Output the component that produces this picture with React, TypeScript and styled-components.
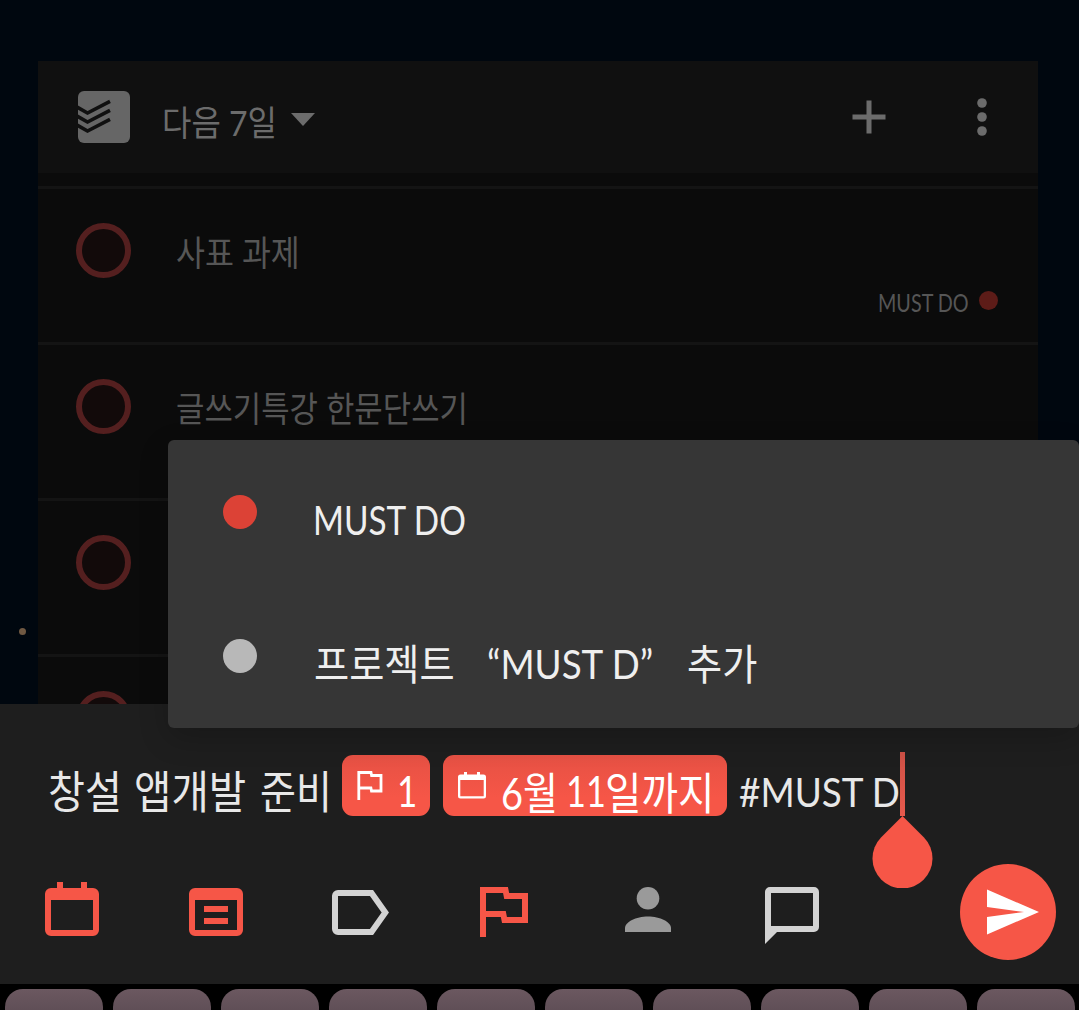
import React, { useLayoutEffect, useRef, useState } from "react";
import styled, { createGlobalStyle } from "styled-components";

const RED = "#f65647";

const GlobalStyle = createGlobalStyle`
  * { box-sizing: border-box; }
  body { margin: 0; background: #000; overflow: hidden; }
`;

const Screen = styled.main`
  position: relative;
  width: 1079px;
  height: 1010px;
  overflow: hidden;
  display: flex;
  flex-direction: column;
  background: #000;
  font-family: Lato, "Noto Sans CJK KR", sans-serif;
`;

/* ---------- fitted text ---------- */

const FitBox = styled.span<{ $w: number; $size: number; $color: string; $weight: number; $gap: number; $drop: number }>`
  display: block;
  flex: none;
  width: ${(p) => p.$w}px;
  margin-left: ${(p) => p.$gap}px;
  padding-top: ${(p) => p.$drop}px;
  font-size: ${(p) => p.$size}px;
  line-height: ${(p) => p.$size}px;
  font-weight: ${(p) => p.$weight};
  color: ${(p) => p.$color};
  white-space: pre;
`;

const FitInner = styled.span`
  display: inline-block;
  transform-origin: left center;
`;

type FitProps = {
  children: string;
  w: number;
  size: number;
  color: string;
  weight?: number;
  gap?: number;
  drop?: number;
};

function Fit({ children, w, size, color, weight = 400, gap = 0, drop = 0 }: FitProps) {
  const ref = useRef<HTMLSpanElement>(null);
  const [scale, setScale] = useState(1);
  useLayoutEffect(() => {
    if (ref.current) setScale(w / ref.current.offsetWidth);
  }, [w, children]);
  return (
    <FitBox $w={w} $size={size} $color={color} $weight={weight} $gap={gap} $drop={drop}>
      <FitInner ref={ref} style={{ transform: `scaleX(${scale})` }}>{children}</FitInner>
    </FitBox>
  );
}

/* ---------- dimmed widget ---------- */

const Wallpaper = styled.section`
  position: relative;
  flex: none;
  height: 704px;
  padding: 61px 41px 0 38px;
  overflow: hidden;
  background: #00070f;
`;

const Spark = styled.i`
  position: absolute;
  left: 19px;
  top: 628px;
  width: 7px;
  height: 7px;
  border-radius: 50%;
  background: #705943;
`;

const Widget = styled.div`
  background: #0b0b0b;
`;

const Header = styled.header`
  display: flex;
  align-items: center;
  height: 112px;
  padding: 0 51px 0 40px;
  background: #101010;
`;

const HeaderTools = styled.div`
  display: flex;
  align-items: center;
  gap: 91px;
  margin-left: auto;
`;

const Caret = styled.svg`
  margin: 4px 0 0 14px;
`;

const List = styled.ul`
  list-style: none;
  margin: 0;
  padding: 13px 0 0;
`;

const Task = styled.li`
  display: flex;
  height: 156px;
  border-top: 3px solid #141414;
  padding: 34px 40px 0 38px;
`;

const Ring = styled.i`
  flex: none;
  width: 55px;
  height: 55px;
  border: 6px solid #541f1f;
  border-radius: 50%;
  background: #120a0a;
`;

const TaskBody = styled.div`
  flex: 1;
  display: flex;
  flex-direction: column;
`;

const TaskTag = styled.div`
  display: flex;
  align-items: center;
  justify-content: flex-end;
  gap: 10px;
  margin-top: 16px;
`;

const Dot = styled.i<{ $size: number; $color: string }>`
  flex: none;
  width: ${(p) => p.$size}px;
  height: ${(p) => p.$size}px;
  border-radius: 50%;
  background: ${(p) => p.$color};
`;

/* ---------- composer sheet ---------- */

const Sheet = styled.section`
  flex: none;
  height: 280px;
  background: #1e1e1e;
  padding-top: 48px;
`;

const InputLine = styled.div`
  display: flex;
  align-items: center;
  height: 64px;
  padding-left: 48px;
`;

const Chip = styled.span<{ $w: number; $gap: number }>`
  flex: none;
  display: flex;
  align-items: center;
  width: ${(p) => p.$w}px;
  height: 61px;
  margin-top: 3px;
  margin-left: ${(p) => p.$gap}px;
  padding-left: 14px;
  border-radius: 11px;
  background: linear-gradient(#e65144, ${RED} 70%);
`;

const Cursor = styled.span`
  position: relative;
  flex: none;
  width: 5px;
  height: 64px;
  background: linear-gradient(#cf5146, #e6594c);
`;

const Handle = styled.svg`
  position: absolute;
  left: -28px;
  top: 63px;
`;

const Toolbar = styled.nav`
  display: flex;
  align-items: center;
  height: 96px;
  margin-top: 48px;
`;

const Tool = styled.button`
  flex: none;
  width: 144px;
  height: 96px;
  padding: 0;
  border: 0;
  background: none;
  display: grid;
  place-items: center;
`;

const Send = styled.button`
  flex: none;
  width: 96px;
  height: 96px;
  margin-left: 96px;
  padding: 0;
  border: 0;
  border-radius: 50%;
  background: ${RED};
`;

const Keyboard = styled.div`
  flex: 1;
  display: flex;
  gap: 10px;
  padding: 5px 0 0 5px;
  background: #000;
`;

const Key = styled.i`
  flex: none;
  width: 98px;
  height: 60px;
  border-radius: 18px;
  background: linear-gradient(#6b5860, #604f57 21px, #5b4a52);
`;

/* ---------- suggestion popup ---------- */

const Popup = styled.div`
  position: absolute;
  left: 168px;
  top: 440px;
  width: 911px;
  height: 288px;
  border-radius: 6px;
  background: #363636;
  box-shadow: 0 10px 30px rgba(0, 0, 0, 0.2);
`;

const Option = styled.div`
  display: flex;
  align-items: center;
  height: 144px;
  padding-left: 55px;
`;

const GRAY = "#d3d3d3";

const Todoist = () => (
  <svg width="52" height="52" viewBox="0 0 52 52">
    <rect width="52" height="52" rx="6" fill="#666" />
    <g fill="none" stroke="#101010" strokeWidth="3.600">
      <path d="M-1 16L9.500 22L32 10.300" />
      <path d="M-1 25L9.500 31L32 19.300" />
      <path d="M-1 34L9.500 40L32 28.300" />
    </g>
  </svg>
);

const CalendarIcon = () => (
  <svg width="72" height="72" viewBox="0 0 24 24" fill={RED}>
    <path fillRule="evenodd" d="M7 2h2v2h6V2h2v2h2a2 2 0 0 1 2 2v12a2 2 0 0 1-2 2H5a2 2 0 0 1-2-2V6a2 2 0 0 1 2-2h2zM5 8v10h14V8z" />
  </svg>
);

const ProjectIcon = () => (
  <svg width="72" height="72" viewBox="0 0 24 24" fill={RED}>
    <path fillRule="evenodd" d="M5 4h14a2 2 0 0 1 2 2v12a2 2 0 0 1-2 2H5a2 2 0 0 1-2-2V6a2 2 0 0 1 2-2zM5 8v10h14V8zM8 10h8v2H8zM8 14h8v2H8z" />
  </svg>
);

const LabelIcon = () => (
  <svg width="72" height="72" viewBox="0 0 72 72">
    <path d="M14 17h33.500l13.800 19.500L47.500 56H14a3 3 0 0 1-3-3V20a3 3 0 0 1 3-3z" fill="none" stroke={GRAY} strokeWidth="6" />
  </svg>
);

const FlagIcon = () => (
  <svg width="72" height="72" viewBox="0 0 72 72">
    <path d="M15 61V14h22.500l1.200 6H57v24H36.500l-1.200-6H15" fill="none" stroke={RED} strokeWidth="6" />
  </svg>
);

const PersonIcon = () => (
  <svg width="72" height="72" viewBox="0 0 72 72" fill="#9a9a9a">
    <circle cx="36" cy="22.300" r="11.300" />
    <path d="M13 56v-4c0-6 11-11.500 23-11.500S59 46 59 52v4z" />
  </svg>
);

const CommentIcon = () => (
  <svg width="72" height="72" viewBox="0 0 72 72">
    <path fill={GRAY} fillRule="evenodd" d="M14 11h44a5 5 0 0 1 5 5v35a5 5 0 0 1-5 5H21L9 68V16a5 5 0 0 1 5-5zM15 17v33h42V17z" />
  </svg>
);

const ChipFlag = () => (
  <svg width="28" height="31" viewBox="0 0 28 31">
    <path d="M2.800 30V2.500H15l.6 3H25v15.500H15.500l-.6-3H2.800" fill="none" stroke="#fff" strokeWidth="2.800" />
  </svg>
);

const ChipCalendar = () => (
  <svg width="30" height="29" viewBox="0 0 30 29" fill="#fff">
    <path fillRule="evenodd" d="M7 1h3v2.500h10V1h3v2.500h3.500a2.500 2.500 0 0 1 2.500 2.500v19a2.500 2.500 0 0 1-2.500 2.500h-23A2.500 2.500 0 0 1 1 25V6a2.500 2.500 0 0 1 2.500-2.500H7zM3.300 9v16.300h23.400V9z" />
  </svg>
);

const tasks: { title?: string; width?: number; project?: string }[] = [
  { title: "사표 과제", width: 124, project: "MUST DO" },
  { title: "글쓰기특강 한문단쓰기", width: 292 },
  {},
  {},
];

export default function App() {
  return (
    <Screen>
      <GlobalStyle />
      <Wallpaper>
        <Spark />
        <Widget>
          <Header>
            <Todoist />
            <Fit w={115} size={35} color="#6c6c6c" gap={32} drop={11}>다음 7일</Fit>
            <Caret width="24" height="13" viewBox="0 0 24 13"><path d="M0 0h24L12 13z" fill="#6c6c6c" /></Caret>
            <HeaderTools>
              <svg width="34" height="34" viewBox="0 0 34 34"><path d="M17 0.500v33M0.500 17h33" stroke="#6c6c6c" strokeWidth="5" /></svg>
              <svg width="10" height="38" viewBox="0 0 10 38" fill="#6c6c6c">
                <circle cx="5" cy="5" r="4.800" /><circle cx="5" cy="19" r="4.800" /><circle cx="5" cy="33" r="4.800" />
              </svg>
            </HeaderTools>
          </Header>
          <List>
            {tasks.map((task, i) => (
              <Task key={i}>
                <Ring />
                <TaskBody>
                  {task.title && (
                    <Fit w={task.width!} size={35} color="#565656" gap={45} drop={12}>{task.title}</Fit>
                  )}
                  {task.project && (
                    <TaskTag>
                      <Fit w={91} size={25} color="#565656" drop={4}>{task.project}</Fit>
                      <Dot $size={19} $color="#5d1c18" />
                    </TaskTag>
                  )}
                </TaskBody>
              </Task>
            ))}
          </List>
        </Widget>
      </Wallpaper>

      <Sheet>
        <InputLine>
          <Fit w={74} size={45} color="#e8e8e8" drop={17}>창설</Fit>
          <Fit w={112} size={45} color="#e8e8e8" gap={12} drop={17}>앱개발</Fit>
          <Fit w={72} size={45} color="#e8e8e8" gap={14} drop={17}>준비</Fit>
          <Chip $w={88} $gap={10}>
            <ChipFlag />
            <Fit w={20} size={42} color="#fff" gap={13} drop={11}>1</Fit>
          </Chip>
          <Chip $w={284} $gap={13}>
            <ChipCalendar />
            <Fit w={57} size={44} color="#fff" gap={14} drop={14}>6월</Fit>
            <Fit w={40} size={42} color="#fff" gap={8} drop={11}>11</Fit>
            <Fit w={109} size={44} color="#fff" gap={-1} drop={14}>일까지</Fit>
          </Chip>
          <Fit w={161} size={41} color="#e8e8e8" gap={12} drop={14}>#MUST D</Fit>
          <Cursor>
            <Handle width="61" height="73" viewBox="0 0 61 73">
              <path d="M30.500 1L52 22.500A30 30 0 1 1 9 22.500z" fill={RED} />
            </Handle>
          </Cursor>
        </InputLine>
        <Toolbar>
          <Tool><CalendarIcon /></Tool>
          <Tool><ProjectIcon /></Tool>
          <Tool><LabelIcon /></Tool>
          <Tool><FlagIcon /></Tool>
          <Tool><PersonIcon /></Tool>
          <Tool><CommentIcon /></Tool>
          <Send>
            <svg width="96" height="96" viewBox="0 0 96 96"><path d="M27 25.500L79 48L27 70.500V53L64 48L27 43z" fill="#fff" /></svg>
          </Send>
        </Toolbar>
      </Sheet>

      <Keyboard>
        {Array.from({ length: 10 }, (_, i) => <Key key={i} />)}
      </Keyboard>

      <Popup>
        <Option>
          <Dot $size={34} $color="#dc4236" />
          <Fit w={153} size={41} color="#efefef" gap={56} drop={14}>MUST DO</Fit>
        </Option>
        <Option>
          <Dot $size={34} $color="#b8b8b8" />
          <Fit w={141} size={42} color="#efefef" gap={57} drop={15}>프로젝트</Fit>
          <Fit w={166} size={41} color="#efefef" gap={32} drop={14}>“MUST D”</Fit>
          <Fit w={70} size={42} color="#efefef" gap={34} drop={15}>추가</Fit>
        </Option>
      </Popup>
    </Screen>
  );
}
